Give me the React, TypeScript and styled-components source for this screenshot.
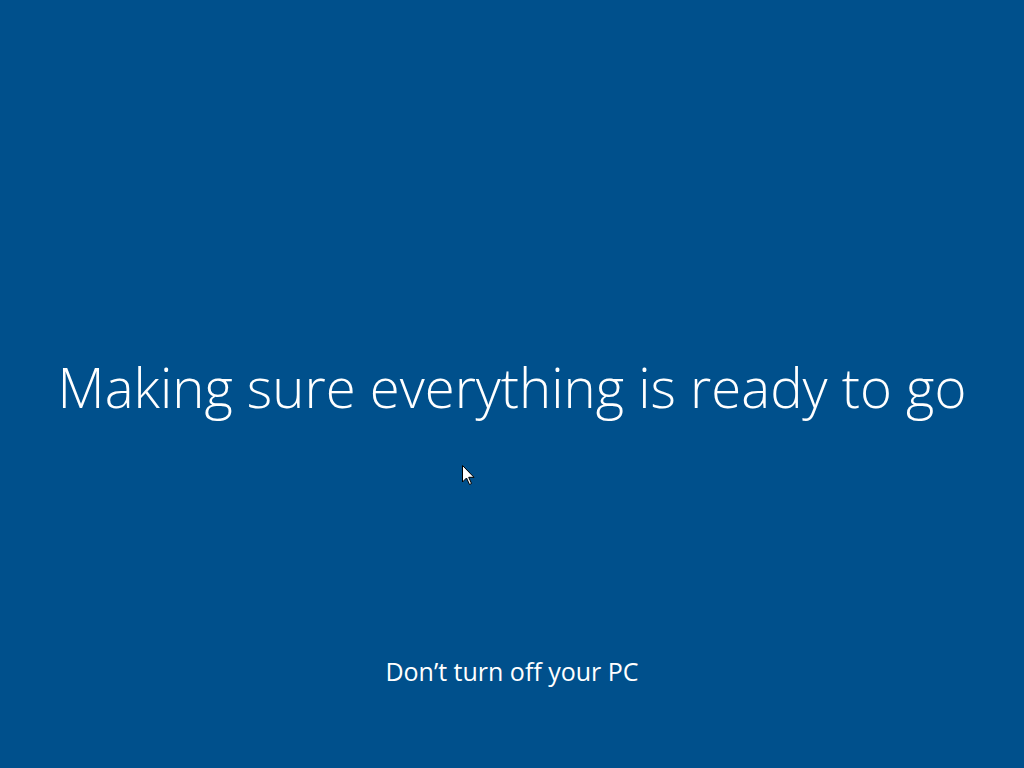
import React from "react";
import styled, { createGlobalStyle } from "styled-components";

const Global = createGlobalStyle`
  html, body { margin: 0; padding: 0; height: 100%; }
  body { background: #00508c; overflow: hidden; }
  #root { height: 100%; }
`;

const Screen = styled.div`
  position: relative;
  width: 1024px;
  height: 768px;
  background: #00508c;
  color: #ffffff;
  font-family: "Open Sans", "Noto Sans", sans-serif;
  display: flex;
  flex-direction: column;
  align-items: center;
`;

const Title = styled.h1`
  margin: 344px 0 0;
  font-size: 54.5px;
  font-weight: 300;
  line-height: 86px;
  white-space: nowrap;
`;

const Footer = styled.p`
  margin: auto 0 81px;
  font-size: 25px;
  font-weight: 400;
  line-height: 32px;
  white-space: nowrap;
`;

const Cursor = styled.svg`
  position: absolute;
  left: 462px;
  top: 465px;
`;

export default function App() {
  return (
    <>
      <Global />
      <Screen>
        <Title>Making sure everything is ready to go</Title>
        <Footer>Don’t turn off your PC</Footer>
        <Cursor width="14" height="22" viewBox="0 0 14 22">
          <path
            d="M0.5 0.5 L0.5 17 L4.5 13 L7.5 19.5 L9.5 18.5 L6.7 12.3 L12 12.3 Z"
            fill="#ffffff"
            stroke="#000000"
            strokeWidth="1"
          />
        </Cursor>
      </Screen>
    </>
  );
}
